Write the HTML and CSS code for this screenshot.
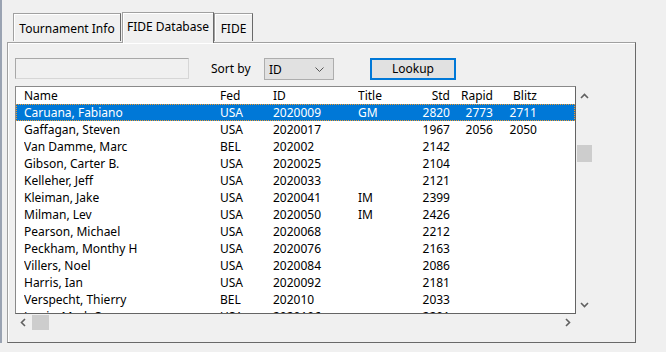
FILE: index.html
```html
<!DOCTYPE html>
<html>
<head>
<meta charset="utf-8">
<link rel="stylesheet" href="styles.css">
</head>
<body>
<div class="frame">
  <div class="edge"></div>
  <div class="main">
    <div class="tabs">
      <div class="tab t1">Tournament Info</div>
      <div class="tab active t2">FIDE Database</div>
      <div class="tab t3">FIDE</div>
    </div>
    <div class="panel">
      <div class="toolbar">
        <div class="input"></div>
        <div class="sortlabel">Sort by</div>
        <div class="select"><span>ID</span><svg class="chev" width="9" height="5" viewBox="0 0 9 5"><polyline points="0.5,0.5 4.5,4.5 8.5,0.5" fill="none" stroke="#555" stroke-width="1"/></svg></div>
        <div class="button">Lookup</div>
      </div>
      <div class="listarea">
        <div class="listview">
          <div class="row header"><span>Name</span><span>Fed</span><span>ID</span><span>Title</span><span class="r">Std</span><span class="r">Rapid</span><span class="r">Blitz</span></div>
          <div class="row sel"><span>Caruana, Fabiano</span><span>USA</span><span>2020009</span><span>GM</span><span class="r">2820</span><span class="r">2773</span><span class="r">2711</span></div>
          <div class="row"><span>Gaffagan, Steven</span><span>USA</span><span>2020017</span><span></span><span class="r">1967</span><span class="r">2056</span><span class="r">2050</span></div>
          <div class="row"><span>Van Damme, Marc</span><span>BEL</span><span>202002</span><span></span><span class="r">2142</span><span></span><span></span></div>
          <div class="row"><span>Gibson, Carter B.</span><span>USA</span><span>2020025</span><span></span><span class="r">2104</span><span></span><span></span></div>
          <div class="row"><span>Kelleher, Jeff</span><span>USA</span><span>2020033</span><span></span><span class="r">2121</span><span></span><span></span></div>
          <div class="row"><span>Kleiman, Jake</span><span>USA</span><span>2020041</span><span>IM</span><span class="r">2399</span><span></span><span></span></div>
          <div class="row"><span>Milman, Lev</span><span>USA</span><span>2020050</span><span>IM</span><span class="r">2426</span><span></span><span></span></div>
          <div class="row"><span>Pearson, Michael</span><span>USA</span><span>2020068</span><span></span><span class="r">2212</span><span></span><span></span></div>
          <div class="row"><span>Peckham, Monthy H</span><span>USA</span><span>2020076</span><span></span><span class="r">2163</span><span></span><span></span></div>
          <div class="row"><span>Villers, Noel</span><span>USA</span><span>2020084</span><span></span><span class="r">2086</span><span></span><span></span></div>
          <div class="row"><span>Harris, Ian</span><span>USA</span><span>2020092</span><span></span><span class="r">2181</span><span></span><span></span></div>
          <div class="row"><span>Verspecht, Thierry</span><span>BEL</span><span>202010</span><span></span><span class="r">2033</span><span></span><span></span></div>
          <div class="row"><span>Lewis, Mark C.</span><span>USA</span><span>2020106</span><span></span><span class="r">2201</span><span></span><span></span></div>
        </div>
        <div class="vscroll">
          <div class="arrow"><svg width="9" height="6" viewBox="0 0 9 6"><polyline points="1,5 4.5,1.5 8,5" fill="none" stroke="#606060" stroke-width="1.6"/></svg></div>
          <div class="vthumb"></div>
          <div class="spacer"></div>
          <div class="arrow"><svg width="9" height="6" viewBox="0 0 9 6"><polyline points="1,1 4.5,4.5 8,1" fill="none" stroke="#606060" stroke-width="1.6"/></svg></div>
        </div>
        <div class="hscroll">
          <div class="harrow"><svg width="6" height="9" viewBox="0 0 6 9"><polyline points="5,1 1.5,4.5 5,8" fill="none" stroke="#606060" stroke-width="1.6"/></svg></div>
          <div class="hthumb"></div>
          <div class="spacer"></div>
          <div class="harrow"><svg width="6" height="9" viewBox="0 0 6 9"><polyline points="1,1 4.5,4.5 1,8" fill="none" stroke="#606060" stroke-width="1.6"/></svg></div>
        </div>
        <div class="corner"></div>
      </div>
    </div>
  </div>
</div>
</body>
</html>
```
FILE: styles.css
```css
* { box-sizing: border-box; }
html, body {
  margin: 0;
  padding: 0;
  background: #f0f0f0;
}
body {
  font-family: "Noto Sans", "Open Sans", sans-serif;
  font-size: 12px;
  color: #000;
}
.frame {
  display: flex;
  width: 666px;
  height: 352px;
  overflow: hidden;
}
.edge {
  width: 2px;
  height: 343px;
  background: #9aa3b2;
  flex: none;
}
.main {
  padding: 12px 0 0 5px;
}
.tabs {
  display: flex;
  align-items: flex-end;
  height: 31px;
  margin-left: 6px;
  margin-bottom: -1px;
  position: relative;
  z-index: 1;
}
.tab {
  height: 28px;
  margin-bottom: 2px;
  border: 1px solid #a0a0a0;
  border-right-color: #696969;
  border-bottom: none;
  box-shadow: inset 1px 1px 0 #ffffff;
  background: #f0f0f0;
  display: flex;
  align-items: center;
  justify-content: center;
  padding-top: 1px;
  white-space: nowrap;
}
.tab.active {
  height: 31px;
  margin-bottom: 0;
  padding-top: 0;
  padding-bottom: 4px;
}
.t1 { width: 108px; margin-right: 1px; }
.t2 { width: 92px; }
.t3 { width: 39px; }
.panel {
  width: 629px;
  height: 301px;
  border: 1px solid #a0a0a0;
  border-right-color: #696969;
  border-bottom-color: #696969;
  box-shadow: inset 1px 1px 0 #ffffff;
  padding: 15px 0 0 7px;
}
.toolbar {
  display: flex;
  align-items: flex-start;
  height: 22px;
}
.input {
  width: 174px;
  height: 21px;
  border: 1px solid #a8a8a8;
  border-right-color: #d6d6d6;
  border-bottom-color: #d6d6d6;
  background: #f0f0f0;
}
.sortlabel {
  margin-left: 22px;
  width: 53px;
  line-height: 22px;
}
.select {
  width: 70px;
  height: 22px;
  border: 1px solid #adadad;
  background: #e1e1e1;
  display: flex;
  align-items: center;
  justify-content: space-between;
  padding: 0 9px 0 4px;
}
.chev { display: block; }
.button {
  margin-left: 36px;
  width: 86px;
  height: 22px;
  border: 2px solid #0078d7;
  background: #e1e1e1;
  display: flex;
  align-items: center;
  justify-content: center;
  padding-bottom: 1px;
}
.listarea {
  margin-top: 6px;
  display: grid;
  grid-template-columns: 561px 18px;
  grid-template-rows: 228px 17px;
}
.listview {
  border: 1px solid #8a8a8a;
  border-right-color: #646464;
  border-bottom-color: #646464;
  background: #ffffff;
  overflow: hidden;
}
.row {
  display: grid;
  grid-template-columns: 196px 53px 85px 42px 50px 43px 44px;
  padding-left: 8px;
  height: 17px;
  line-height: 17px;
  white-space: nowrap;
}
.row span { overflow: hidden; }
.row .r { text-align: right; }
.row.sel {
  background: #0078d7;
  color: #ffffff;
  outline: 1px dotted #f39a2b;
  outline-offset: -1px;
}
.vscroll {
  display: flex;
  flex-direction: column;
  align-items: flex-start;
}
.arrow {
  width: 17px;
  height: 19px;
  display: flex;
  align-items: center;
  justify-content: center;
}
.vthumb {
  margin-top: 40px;
  margin-left: 1px;
  width: 15px;
  height: 17px;
  background: #cdcdcd;
}
.spacer { flex: 1; }
.hscroll {
  display: flex;
  align-items: center;
}
.harrow {
  width: 15px;
  height: 17px;
  display: flex;
  align-items: center;
  justify-content: center;
}
.hthumb {
  margin-left: 2px;
  width: 17px;
  height: 15px;
  background: #cdcdcd;
}
.hscroll .harrow:last-child { margin-right: 1px; }
.corner { background: #f0f0f0; }
```
